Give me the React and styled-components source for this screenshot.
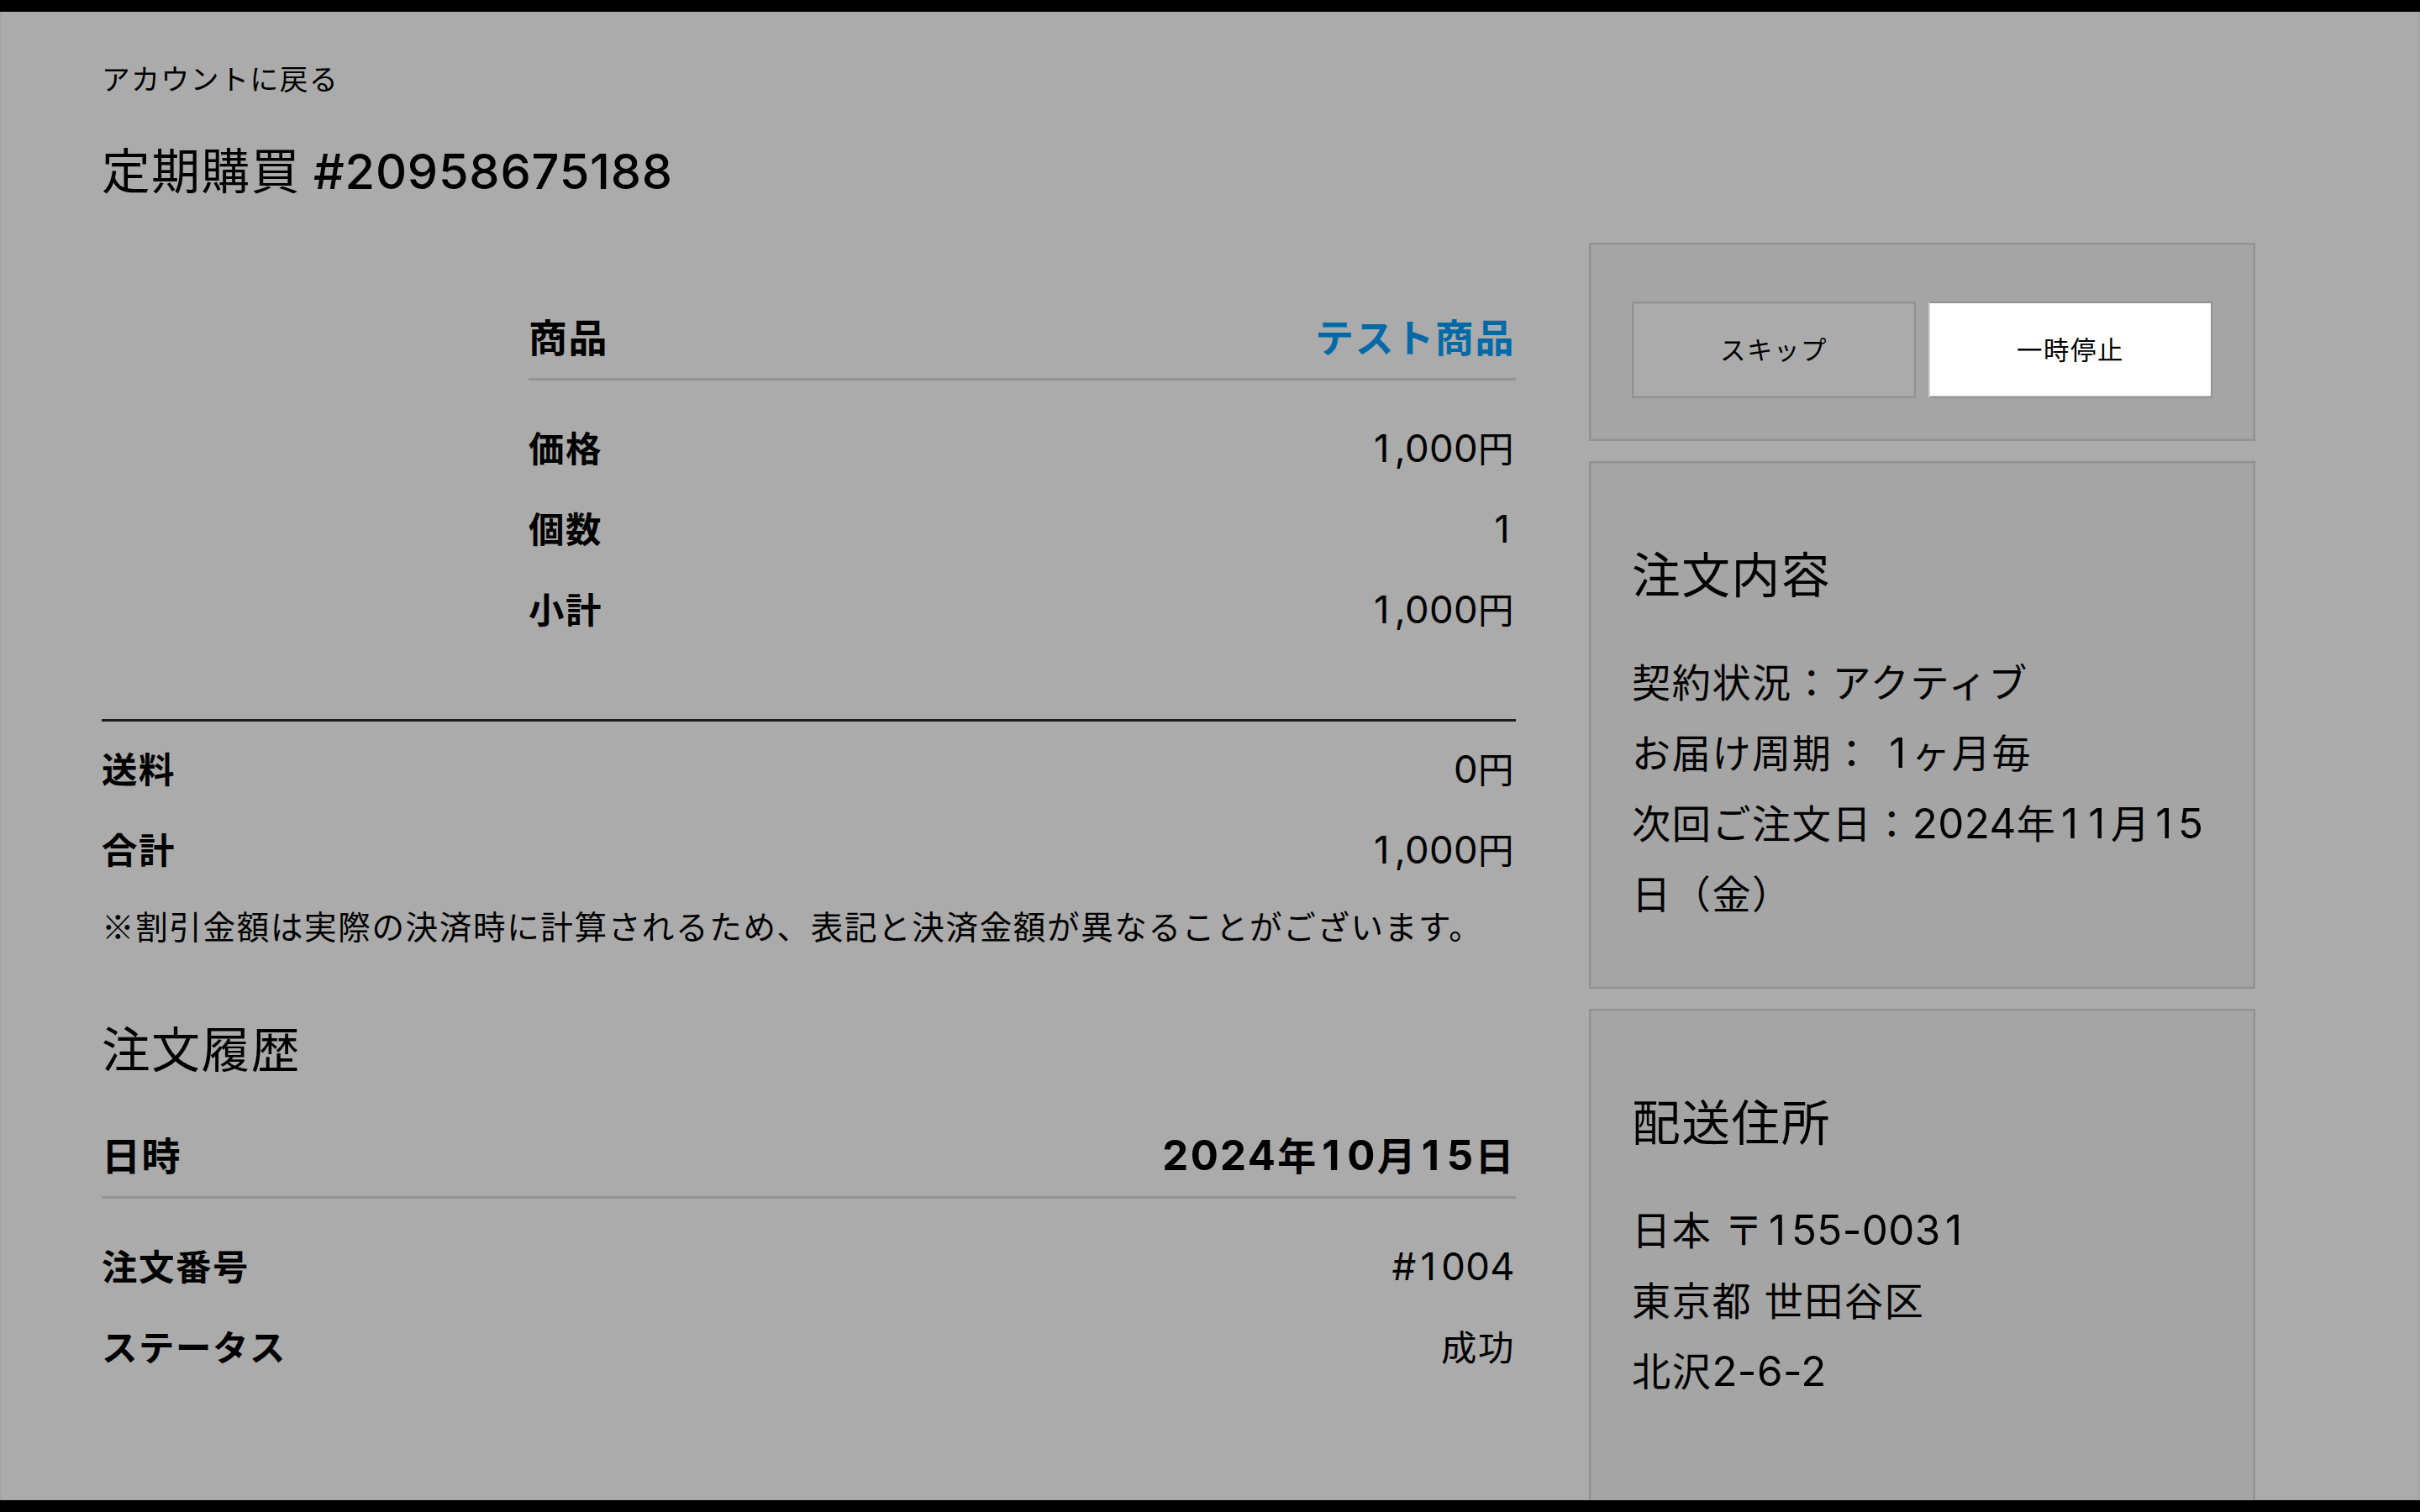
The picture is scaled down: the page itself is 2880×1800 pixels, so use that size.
import React from "react";
import styled, { createGlobalStyle } from "styled-components";

const Global = createGlobalStyle`
  * { box-sizing: border-box; }
  html, body { margin: 0; background: #000; }
  body { overflow: hidden; }
  h1, h2, p, dl, dt, dd { margin: 0; font-weight: inherit; }
`;

const Screen = styled.div`
  width: 2880px;
  height: 1800px;
  border: solid #000;
  border-width: 14px 0;
  overflow: hidden;
  font-family: Inter, "Noto Sans CJK JP", sans-serif;
  letter-spacing: 1.6px;
  color: #000;
`;

const Page = styled.main`
  height: 1772px;
  padding: 48px 0 0 120px;
  background: #ababab;
  border: 1px solid #a0a0a0;
  border-top: 0;
`;

const BackLink = styled.a`
  display: block;
  width: max-content;
  font-size: 33.7px;
  line-height: 66px;
  color: #000;
`;

const Title = styled.h1`
  margin-top: 37px;
  font-size: 57.7px;
  line-height: 78px;
  word-spacing: -3px;
`;

const OrderNumber = styled.span`
  font-weight: 450;
  letter-spacing: 0.75px;
`;

const Columns = styled.div`
  display: grid;
  grid-template-columns: 1683px 793px;
  column-gap: 87px;
  align-items: start;
  margin-top: 46px;
`;

const Main = styled.section`
  display: flex;
  flex-direction: column;
`;

const Product = styled.dl`
  margin-left: 508px;
  padding-top: 72px;
`;

const Totals = styled.dl`
  margin-top: 81px;
  padding-top: 10px;
  border-top: 3px solid #1c1c1c;
`;

const Row = styled.div`
  display: flex;
  justify-content: space-between;
  height: 96px;
  line-height: 96px;
  font-size: 42.4px;
`;

const HeadRow = styled(Row)`
  height: 92px;
  line-height: 82px;
  margin-bottom: 34px;
  border-bottom: 3px solid #939393;
  font-size: 46px;
  font-weight: 700;
`;

const Label = styled.dt`
  font-weight: 700;
`;

const Value = styled.dd`
  padding-right: 1px;
`;

const Digits = styled.span`
  font-size: 1.07em;
  line-height: 1;
  letter-spacing: ${(p) => p.$tracking || 0.4}px;
`;

const One = styled.span`
  padding: 0 0.13em 0 0.11em;
`;

const ProductLink = styled.a`
  color: #006aa8;
`;

const Note = styled.p`
  font-family: "Noto Sans CJK JP", sans-serif;
  font-size: 38.6px;
  line-height: 80px;
`;

const SectionTitle = styled.h2`
  font-size: 57.7px;
  line-height: 76px;
`;

const History = styled.section`
  margin-top: 71px;
`;

const HistoryList = styled.dl`
  margin-top: 47px;
`;

const Side = styled.aside`
  display: flex;
  flex-direction: column;
  gap: 24px;
`;

const Card = styled.section`
  height: ${(p) => p.$height}px;
  padding: ${(p) => p.$top}px 49px 0;
  background: #a5a5a5;
  border: 2px solid #919191;
  box-shadow: inset 0 0 0 1px #9d9d9d;
`;

const Actions = styled.div`
  display: grid;
  grid-template-columns: 1fr 1fr;
  gap: 15px;
`;

const Action = styled.button`
  height: 115px;
  padding: 0 0 4px;
  border: 2px solid #919191;
  border-left-color: ${(p) => (p.$active ? "#d0d0d0" : "#919191")};
  background: ${(p) => (p.$active ? "#fff" : "#ababab")};
  box-shadow: ${(p) => (p.$active ? "inset 0 -1px 0 #d0d0d0" : "inset 0 0 0 1px #a0a0a0")};
  font: inherit;
  font-size: 30.4px;
  letter-spacing: inherit;
  color: #000;
`;

const Lines = styled.div`
  margin-top: 48px;
  font-size: 46.1px;
  line-height: 84px;
`;

const Line = styled.p`
  white-space: pre-line;
`;

/* Gives the narrow "1" the same advance as the other digits. */
function Num({ children, tracking }) {
  return (
    <Digits $tracking={tracking}>
      {children.split(/(1)/).map((part, i) => (part === "1" ? <One key={i}>1</One> : part))}
    </Digits>
  );
}

function Entry({ label, children }) {
  return (
    <Row>
      <Label>{label}</Label>
      <Value>{children}</Value>
    </Row>
  );
}

export default function App() {
  return (
    <Screen>
      <Global />
      <Page>
        <BackLink>アカウントに戻る</BackLink>
        <Title>
          定期購買 <OrderNumber>#20958675188</OrderNumber>
        </Title>
        <Columns>
          <Main>
            <Product>
              <HeadRow>
                <Label>商品</Label>
                <Value>
                  <ProductLink>テスト商品</ProductLink>
                </Value>
              </HeadRow>
              <Entry label="価格">
                <Num>1,000</Num>円
              </Entry>
              <Entry label="個数">
                <Num>1</Num>
              </Entry>
              <Entry label="小計">
                <Num>1,000</Num>円
              </Entry>
            </Product>
            <Totals>
              <Entry label="送料">
                <Num>0</Num>円
              </Entry>
              <Entry label="合計">
                <Num>1,000</Num>円
              </Entry>
            </Totals>
            <Note>※割引金額は実際の決済時に計算されるため、表記と決済金額が異なることがございます。</Note>
            <History>
              <SectionTitle>注文履歴</SectionTitle>
              <HistoryList>
                <HeadRow>
                  <Label>日時</Label>
                  <Value>
                    <Num tracking={2.3}>2024</Num>年<Num tracking={2.3}>10</Num>月<Num tracking={2.3}>15</Num>日
                  </Value>
                </HeadRow>
                <Entry label="注文番号">
                  <Num>#1004</Num>
                </Entry>
                <Entry label="ステータス">成功</Entry>
              </HistoryList>
            </History>
          </Main>
          <Side>
            <Card $height={236} $top={68}>
              <Actions>
                <Action>スキップ</Action>
                <Action $active>一時停止</Action>
              </Actions>
            </Card>
            <Card $height={628} $top={96}>
              <SectionTitle>注文内容</SectionTitle>
              <Lines>
                <Line>契約状況：アクティブ</Line>
                <Line>
                  お届け周期： <Num>1</Num>ヶ月毎
                </Line>
                <Line>
                  次回ご注文日：<Num>2024</Num>年<Num>11</Num>月<Num>15</Num>
                  {"\n日（金）"}
                </Line>
              </Lines>
            </Card>
            <Card $height={628} $top={96}>
              <SectionTitle>配送住所</SectionTitle>
              <Lines>
                <Line>
                  日本 〒<Num>155-0031</Num>
                </Line>
                <Line>東京都 世田谷区</Line>
                <Line>
                  北沢<Num>2-6-2</Num>
                </Line>
              </Lines>
            </Card>
          </Side>
        </Columns>
      </Page>
    </Screen>
  );
}
